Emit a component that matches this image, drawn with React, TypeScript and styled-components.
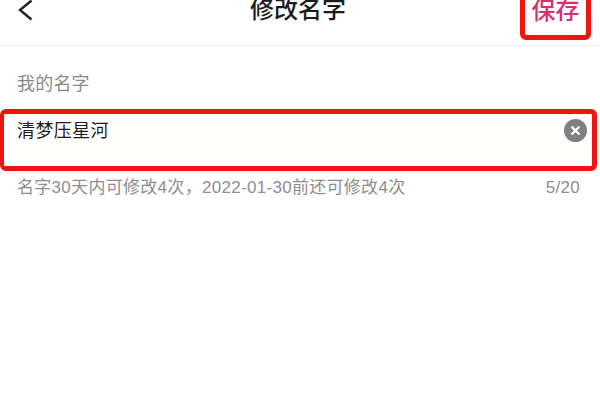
import React from "react";
import styled, { createGlobalStyle } from "styled-components";

const GlobalStyle = createGlobalStyle`
  html, body {
    margin: 0;
    padding: 0;
    background: #fff;
    overflow: hidden;
    font-family: "Liberation Sans", "Noto Sans CJK SC", sans-serif;
  }
`;

const Page = styled.div`
  width: 600px;
  height: 420px;
  overflow: hidden;
  background: #fff;
`;

const Header = styled.header`
  height: 45px;
  box-sizing: content-box;
  border-bottom: 1px solid #efefef;
  display: grid;
  grid-template-columns: 1fr auto 1fr;
  align-items: start;
  overflow: hidden;
`;

const BackButton = styled.button`
  width: 20px;
  height: 24px;
  margin: 0 0 0 16px;
  padding: 0;
  border: 0;
  background: none;
  display: block;
`;

const BackIcon = styled.svg`
  display: block;
`;

const Title = styled.h1`
  margin: -7px 4px 0 0;
  font-size: 24px;
  line-height: 34px;
  font-weight: 500;
  color: #1c1c1c;
`;

const SaveBox = styled.button`
  justify-self: end;
  box-sizing: border-box;
  width: 71px;
  height: 50px;
  margin: -10px 9px 0 0;
  padding: 0 0 9px;
  border: 5px solid #f01410;
  border-radius: 6px;
  background: #fff;
  font-family: inherit;
  font-size: 24px;
  line-height: 30px;
  font-weight: 500;
  color: #d62f72;
  display: flex;
  align-items: center;
  justify-content: center;
`;

const Caption = styled.div`
  margin-top: 27px;
  padding-left: 17px;
  font-size: 18px;
  line-height: 22px;
  letter-spacing: 0.2px;
  color: #8a8a8a;
`;

const NameField = styled.div`
  box-sizing: border-box;
  width: 597px;
  height: 62px;
  margin-top: 14px;
  padding: 5px 5px 0 13px;
  border: 5px solid #f01410;
  border-left-width: 4px;
  border-radius: 6px;
  background: #fffffd;
  display: flex;
  justify-content: space-between;
  align-items: flex-start;
`;

const NameText = styled.span`
  font-size: 18px;
  line-height: 24px;
  letter-spacing: 0.4px;
  color: #1c1c1c;
`;

const ClearIcon = styled.svg`
  display: block;
  flex: none;
`;

const Hint = styled.div`
  display: flex;
  justify-content: space-between;
  margin-top: 6px;
  padding: 0 20px 0 17px;
  font-size: 17px;
  line-height: 22px;
  letter-spacing: 0.3px;
  color: #8e8e8e;
`;

export default function App() {
  return (
    <Page>
      <GlobalStyle />
      <Header>
        <BackButton aria-label="返回">
          <BackIcon width="20" height="24" viewBox="0 0 20 24" fill="none">
            <path d="M15.5 0.5 L4 10 L15.5 19.5" stroke="#222" strokeWidth="2.4" />
          </BackIcon>
        </BackButton>
        <Title>修改名字</Title>
        <SaveBox>保存</SaveBox>
      </Header>
      <Caption>我的名字</Caption>
      <NameField>
        <NameText>清梦压星河</NameText>
        <ClearIcon width="23" height="23" viewBox="0 0 23 23">
          <circle cx="11.5" cy="11.5" r="11.5" fill="#808080" />
          <path d="M7.5 7.5 L15.5 15.5 M15.5 7.5 L7.5 15.5" stroke="#fff" strokeWidth="2.2" />
        </ClearIcon>
      </NameField>
      <Hint>
        <span>名字30天内可修改4次，2022-01-30前还可修改4次</span>
        <span>5/20</span>
      </Hint>
    </Page>
  );
}
